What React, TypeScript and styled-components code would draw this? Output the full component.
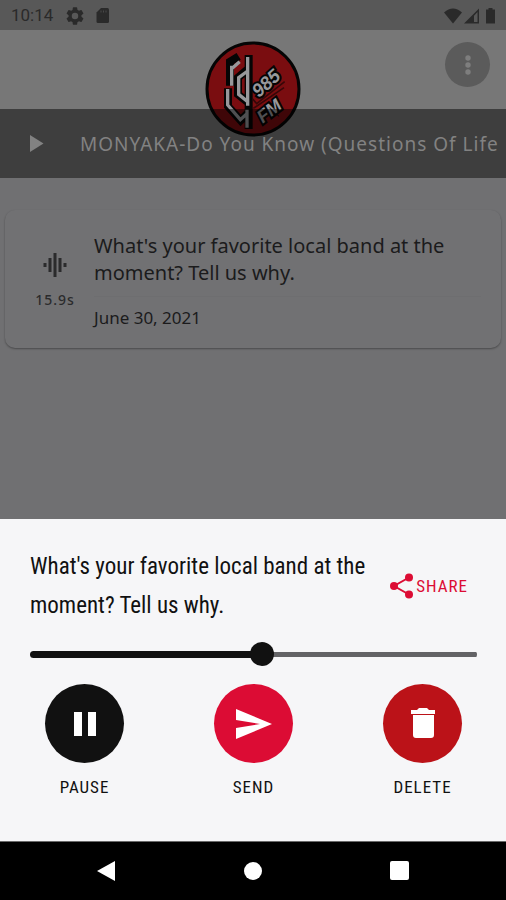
import React, { useState } from "react";
import styled, { createGlobalStyle } from "styled-components";

const GlobalStyle = createGlobalStyle`
  *, *::before, *::after { box-sizing: border-box; }
  body { margin: 0; background: #707072; }
  button, input { font: inherit; margin: 0; }
  h1, h2, p { margin: 0; font-weight: 400; }
`;

const bodyFont = `"Noto Sans", "Open Sans", sans-serif`;
const narrowFont = `"Roboto Condensed", Roboto, sans-serif`;

const Screen = styled.div`
  display: flex;
  flex-direction: column;
  min-height: 100vh;
  overflow: hidden;
  background: #707072;
  font-family: ${bodyFont};
  color: #1b1b1c;
`;

const StatusBar = styled.div`
  display: flex;
  align-items: center;
  height: 30px;
  padding: 1px 8px 0 11px;
  background: #585858;
  color: #2a2a2a;
  font-family: Roboto, sans-serif;
  font-size: 17px;
  line-height: 29px;
`;

const StatusIcons = styled.div<{ $end?: boolean }>`
  display: flex;
  align-items: center;
  gap: ${(p) => (p.$end ? "2px" : "9px")};
  margin-left: ${(p) => (p.$end ? "auto" : "13px")};
`;

const Top = styled.header`
  background: #777777;
`;

const Header = styled.div`
  position: relative;
  display: flex;
  justify-content: flex-end;
  height: 79px;
  padding: 12px 16px 0;
`;

const LogoHolder = styled.div`
  position: absolute;
  top: 11px;
  left: 0;
  right: 0;
  display: flex;
  justify-content: center;
  pointer-events: none;
`;

const MenuButton = styled.button`
  display: grid;
  place-items: center;
  width: 45px;
  height: 45px;
  padding: 0;
  border: 0;
  border-radius: 50%;
  background: #5b5b5b;
  color: #7e7e7e;
`;

const Player = styled.div`
  position: relative;
  display: flex;
  align-items: center;
  gap: 35px;
  height: 69px;
  padding-left: 28px;
  background: rgba(0, 0, 0, 0.48);
  color: #828282;
`;

const PlainButton = styled.button`
  display: grid;
  place-items: center;
  padding: 0;
  border: 0;
  background: none;
  color: inherit;
`;

const TrackTitle = styled.p`
  flex: 1;
  min-width: 0;
  overflow: hidden;
  white-space: nowrap;
  font-size: 19px;
  line-height: 28px;
  letter-spacing: 1px;
`;

const Content = styled.main`
  flex: 1;
  padding: 32px 5px;
`;

const Card = styled.article`
  display: flex;
  gap: 19px;
  padding: 22px 20px 18px 30px;
  border-radius: 10px;
  background: #717173;
  box-shadow: 0 1px 2px rgba(0, 0, 0, 0.35);
`;

const Clip = styled.div`
  display: flex;
  flex-direction: column;
  align-items: center;
  justify-content: center;
  gap: 12px;
  width: 40px;
  font-size: 14px;
  line-height: 20px;
  font-weight: 500;
  letter-spacing: 1px;
  color: #2b2b2c;
`;

const CardText = styled.div`
  flex: 1;
`;

const CardTitle = styled.h1`
  padding-bottom: 10px;
  border-bottom: 1px solid #6e6e70;
  font-size: 20px;
  line-height: 27px;
`;

const CardDate = styled.p`
  padding-top: 9px;
  font-size: 17px;
  line-height: 24px;
`;

const Sheet = styled.section`
  padding: 28px 29px 40px 30px;
  background: #f6f6f8;
  color: #111111;
  font-family: ${narrowFont};
`;

const SheetHead = styled.div`
  display: flex;
  align-items: center;
  justify-content: space-between;
  gap: 20px;
  padding-right: 9px;
`;

const Question = styled.h2`
  flex: 1;
  font-size: 23px;
  line-height: 39px;
`;

const ShareButton = styled.button`
  display: flex;
  align-items: center;
  gap: 2px;
  padding: 0;
  border: 0;
  background: none;
  color: #dc0c34;
  font-size: 17px;
  line-height: 28px;
  letter-spacing: 1px;
`;

const Seek = styled.input`
  display: block;
  width: 100%;
  height: 26px;
  margin: 16px 0 17px;
  appearance: none;
  background: none;

  &::-webkit-slider-runnable-track {
    height: 7px;
    border-radius: 4px;
    background:
      linear-gradient(#111111, #111111) left center / 52% 7px no-repeat,
      linear-gradient(#636366, #636366) center / 100% 5px no-repeat;
  }

  &::-webkit-slider-thumb {
    appearance: none;
    width: 24px;
    height: 24px;
    margin-top: -9px;
    border-radius: 50%;
    background: #111111;
  }
`;

const Actions = styled.div`
  display: flex;
  justify-content: space-between;
  padding: 0 15px;
`;

const ActionButton = styled.button`
  display: flex;
  flex-direction: column;
  align-items: center;
  gap: 10px;
  width: 79px;
  padding: 0;
  border: 0;
  background: none;
  color: #111111;
  font-size: 17px;
  line-height: 28px;
  letter-spacing: 1px;
`;

const ActionDisc = styled.span<{ $color: string }>`
  display: grid;
  place-items: center;
  width: 79px;
  height: 79px;
  border-radius: 50%;
  background: ${(p) => p.$color};
  color: #ffffff;
`;

const SystemNav = styled.nav`
  display: flex;
  align-items: center;
  justify-content: space-between;
  height: 59px;
  padding: 0 96px;
  border-top: 1px solid #6a6a6a;
  background: #000000;
  color: #ffffff;
`;

const StationLogo = () => (
  <svg width="96" height="96" viewBox="29 32 288 288" role="img" aria-label="RDU 98.5 FM">
    <circle cx="173" cy="176" r="138" fill="#7a0d10" stroke="#050505" strokeWidth="9" />
    <g fill="none" stroke="#050505" strokeWidth="24">
      <path d="M104 166v-72l26-16M160 74v222M158 116l-30 26v50l30 24M98 174v54l38 42 20-20" />
    </g>
    <path d="M172 206l12 14 84-66M174 234l92-62" fill="none" stroke="#360708" strokeWidth="5" />
    <g fill="none" stroke="#98989b" strokeWidth="10">
      <path d="M109 166v-60M108 116l25-22M157 80v146M157 122l-27 20v50l27 22" />
      <path d="M97 176v48l38 44 18-16M155 238v54" />
    </g>
    <g
      fill="#98989b"
      stroke="#050505"
      strokeWidth="12"
      paintOrder="stroke"
      fontFamily="Liberation Sans, sans-serif"
      fontWeight="700"
      fontStyle="italic"
    >
      <text transform="translate(190 204) rotate(-42)" fontSize="56">985</text>
      <text transform="translate(202 280) rotate(-38)" fontSize="54">FM</text>
    </g>
  </svg>
);

const GearIcon = () => (
  <svg width="18" height="18" viewBox="2 2 20 20" fill="currentColor" aria-hidden="true">
    <path d="M19.14 12.94c.04-.3.06-.61.06-.94s-.02-.64-.07-.94l2.03-1.58a.49.49 0 0 0 .12-.61l-1.92-3.32a.49.49 0 0 0-.59-.22l-2.39.96a7 7 0 0 0-1.62-.94l-.36-2.54a.48.48 0 0 0-.48-.41h-3.84a.47.47 0 0 0-.47.41l-.36 2.54a7.3 7.3 0 0 0-1.62.94l-2.39-.96a.48.48 0 0 0-.59.22L2.74 8.87a.47.47 0 0 0 .12.61l2.03 1.58a6 6 0 0 0-.02 1.88l-2.03 1.58a.49.49 0 0 0-.12.61l1.92 3.32c.12.22.37.29.59.22l2.39-.96c.5.38 1.03.7 1.62.94l.36 2.54c.05.24.24.41.48.41h3.84c.24 0 .44-.17.47-.41l.36-2.54a7 7 0 0 0 1.62-.94l2.39.96c.22.08.47 0 .59-.22l1.92-3.32a.47.47 0 0 0-.12-.61zM12 15.6a3.6 3.6 0 1 1 0-7.2 3.6 3.6 0 0 1 0 7.2z" />
  </svg>
);

const CardIcon = () => (
  <svg width="18" height="18" viewBox="0 0 18 18" fill="currentColor" aria-hidden="true">
    <path d="M8 1h6.500a1.500 1.500 0 0 1 1.500 1.500v12a1.500 1.500 0 0 1-1.500 1.500h-9.500a1.500 1.500 0 0 1-1.500-1.500v-9z" />
    <path d="M8 3.500v2M10.500 3.500v2M13 3.500v2" stroke="#484848" strokeWidth="1" />
  </svg>
);

const WifiIcon = () => (
  <svg width="18" height="16" viewBox="0 0 18 16" fill="currentColor" aria-hidden="true">
    <path d="M0 4.500Q9-3.500 18 4.500L9 15.500z" />
  </svg>
);

const SignalIcon = () => (
  <svg width="16" height="16" viewBox="0 0 16 16" fill="currentColor" aria-hidden="true">
    <path fillRule="evenodd" d="M15 .5v15H0zM13.500 4l-3.500 3.800V14h3.500z" />
  </svg>
);

const BatteryIcon = () => (
  <svg width="16" height="16" viewBox="0 0 16 16" fill="currentColor" aria-hidden="true">
    <path d="M6.500 0h4v1.500h2.500v14H4V1.500h2.500z" />
  </svg>
);

const actions = [
  {
    label: "PAUSE",
    color: "#111111",
    icon: (
      <svg width="36" height="36" viewBox="0 0 36 36" fill="currentColor" aria-hidden="true">
        <path d="M7 6h8v24H7zM21 6h8v24h-8z" />
      </svg>
    ),
  },
  {
    label: "SEND",
    color: "#dc0c34",
    icon: (
      <svg width="36" height="36" viewBox="0 0 36 36" fill="currentColor" aria-hidden="true">
        <path d="M0 3l36 15L0 33V22l24-4L0 14z" />
      </svg>
    ),
  },
  {
    label: "DELETE",
    color: "#bb1218",
    icon: (
      <svg width="36" height="36" viewBox="0 0 36 36" fill="currentColor" aria-hidden="true">
        <path d="M6 4h6l2-2h8l2 2h6v4H6zM8 9h21v20a3 3 0 0 1-3 3H11a3 3 0 0 1-3-3z" />
      </svg>
    ),
  },
];

export default function App() {
  const [position, setPosition] = useState(52);

  return (
    <>
      <GlobalStyle />
      <Screen>
        <StatusBar>
          <span>10:14</span>
          <StatusIcons>
            <GearIcon />
            <CardIcon />
          </StatusIcons>
          <StatusIcons $end>
            <WifiIcon />
            <SignalIcon />
            <BatteryIcon />
          </StatusIcons>
        </StatusBar>

        <Top>
          <Header>
            <LogoHolder>
              <StationLogo />
            </LogoHolder>
            <MenuButton aria-label="Menu">
              <svg width="8" height="22" viewBox="0 0 8 22" fill="currentColor" aria-hidden="true">
                <circle cx="4" cy="4" r="2.700" />
                <circle cx="4" cy="11" r="2.700" />
                <circle cx="4" cy="18" r="2.700" />
              </svg>
            </MenuButton>
          </Header>
          <Player>
            <PlainButton aria-label="Play">
              <svg width="17" height="17" viewBox="0 0 17 17" fill="currentColor" aria-hidden="true">
                <path d="M2 0l13.500 8.500L2 17z" />
              </svg>
            </PlainButton>
            <TrackTitle>MONYAKA-Do You Know (Questions Of Life</TrackTitle>
          </Player>
        </Top>

        <Content>
          <Card>
            <Clip>
              <svg width="24" height="26" viewBox="0 0 24 26" fill="none" stroke="currentColor" strokeWidth="3" aria-hidden="true">
                <path d="M2 11v4M7 6v14M12 1v24M17 6v14M22 11v4" />
              </svg>
              <span>15.9s</span>
            </Clip>
            <CardText>
              <CardTitle>What's your favorite local band at the moment? Tell us why.</CardTitle>
              <CardDate>June 30, 2021</CardDate>
            </CardText>
          </Card>
        </Content>

        <Sheet>
          <SheetHead>
            <Question>What's your favorite local band at the moment? Tell us why.</Question>
            <ShareButton>
              <svg width="24" height="26" viewBox="0 0 24 26" fill="currentColor" aria-hidden="true">
                <path d="M19 4.500L4 13l15 8.500" fill="none" stroke="currentColor" strokeWidth="2" />
                <circle cx="19" cy="4.500" r="4" />
                <circle cx="4" cy="13" r="4" />
                <circle cx="19" cy="21.500" r="4" />
              </svg>
              SHARE
            </ShareButton>
          </SheetHead>
          <Seek
            type="range"
            aria-label="Playback position"
            min={0}
            max={100}
            value={position}
            onChange={(e) => setPosition(Number(e.target.value))}
          />
          <Actions>
            {actions.map((a) => (
              <ActionButton key={a.label}>
                <ActionDisc $color={a.color}>{a.icon}</ActionDisc>
                {a.label}
              </ActionButton>
            ))}
          </Actions>
        </Sheet>

        <SystemNav aria-label="System">
          <PlainButton aria-label="Back">
            <svg width="20" height="22" viewBox="0 0 20 22" fill="currentColor" aria-hidden="true">
              <path d="M19 1v20L1 11z" />
            </svg>
          </PlainButton>
          <PlainButton aria-label="Home">
            <svg width="20" height="20" viewBox="0 0 20 20" fill="currentColor" aria-hidden="true">
              <circle cx="10" cy="10" r="9" />
            </svg>
          </PlainButton>
          <PlainButton aria-label="Overview">
            <svg width="20" height="20" viewBox="0 0 20 20" fill="currentColor" aria-hidden="true">
              <rect width="19" height="19" rx="2" />
            </svg>
          </PlainButton>
        </SystemNav>
      </Screen>
    </>
  );
}
